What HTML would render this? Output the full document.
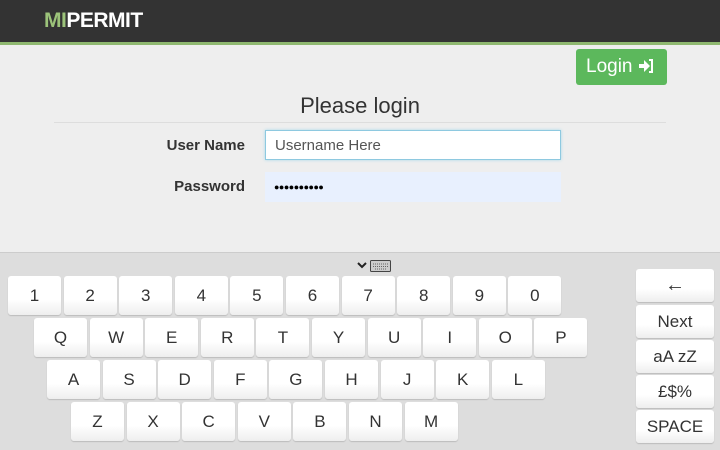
<!DOCTYPE html>
<html><head><meta charset="utf-8"><style>
*{margin:0;padding:0;box-sizing:border-box}
body{width:720px;height:450px;overflow:hidden;background:#eee;font-family:"Liberation Sans",Arial,sans-serif;position:relative}
.hdr{position:absolute;left:0;top:0;width:720px;height:42px;background:#333}
.gl{position:absolute;left:0;top:42px;width:720px;height:3px;background:#8fb870}
.logo{position:absolute;left:44px;top:9px;font-size:21px;font-weight:bold;color:#fff;letter-spacing:-0.5px}
.logo b{color:#9cc37a}
.btn{position:absolute;left:576px;top:49px;width:91px;height:36px;background:#5cb85c;border-radius:3px;color:#fff;font-size:19px;line-height:36px;padding-left:10px}
h1{position:absolute;left:0;width:720px;top:93px;text-align:center;font-weight:normal;font-size:22px;color:#333}
.hr{position:absolute;left:54px;top:122px;width:612px;height:1px;background:#ddd}
.lbl{position:absolute;right:475px;font-weight:bold;font-size:15px;color:#333}
.inp{position:absolute;left:265px;width:296px;height:30px;font-size:15px;padding-left:9px;line-height:30px}
.kb{position:absolute;left:0;top:252px;width:720px;height:198px;background:#ddd;border-top:1px solid #ccc}
.k{position:absolute;width:53px;height:39px;background:linear-gradient(#fff,#fff 60%,#eee);border-radius:3px;box-shadow:0 1px 1px #bbb;text-align:center;line-height:39px;font-size:17px;color:#333}
.r{left:636px;width:78px;height:33px;line-height:33px}
</style></head><body>
<div class="hdr"></div><div class="gl"></div>
<div class="logo"><b>MI</b>PERMIT</div>
<div class="btn">Login <svg width="16" height="16" viewBox="0 0 16 16" style="vertical-align:-2px"><path d="M1 6h5V2l6 6-6 6v-4H1z" fill="#fff"/><path d="M11 2h3v12h-3" stroke="#fff" stroke-width="2" fill="none"/></svg></div>
<h1>Please login</h1>
<div class="hr"></div>
<div class="lbl" style="top:137px">User Name</div>
<div class="inp" style="top:130px;background:#fff;border:1px solid #8ec9e0;box-shadow:0 0 3px #a8d8ea;color:#555">Username Here</div>
<div class="lbl" style="top:178px">Password</div>
<div class="inp" style="top:172px;background:#e8f0fe;color:#000;font-size:9px;letter-spacing:-0.5px">●●●●●●●●●●</div>
<div class="kb">
<svg style="position:absolute;left:357px;top:6px" width="36" height="14" viewBox="0 0 36 14"><path d="M1 4l4 4 4-4" stroke="#222" stroke-width="2" fill="none"/><rect x="13.5" y="1.5" width="20" height="11" rx="1" fill="#ccc" stroke="#444"/><path d="M16 5h15M16 7.5h15M18 10h11" stroke="#666" stroke-dasharray="1 1"/></svg>
</div>
<div class="k" style="left:8px;top:276px">1</div><div class="k" style="left:63.6px;top:276px">2</div><div class="k" style="left:119.2px;top:276px">3</div><div class="k" style="left:174.8px;top:276px">4</div><div class="k" style="left:230.4px;top:276px">5</div><div class="k" style="left:286px;top:276px">6</div><div class="k" style="left:341.6px;top:276px">7</div><div class="k" style="left:397.2px;top:276px">8</div><div class="k" style="left:452.8px;top:276px">9</div><div class="k" style="left:508.4px;top:276px">0</div>
<div class="k" style="left:34px;top:318px">Q</div><div class="k" style="left:89.6px;top:318px">W</div><div class="k" style="left:145.2px;top:318px">E</div><div class="k" style="left:200.8px;top:318px">R</div><div class="k" style="left:256.4px;top:318px">T</div><div class="k" style="left:312px;top:318px">Y</div><div class="k" style="left:367.6px;top:318px">U</div><div class="k" style="left:423.2px;top:318px">I</div><div class="k" style="left:478.8px;top:318px">O</div><div class="k" style="left:534.4px;top:318px">P</div>
<div class="k" style="left:47px;top:360px">A</div><div class="k" style="left:102.6px;top:360px">S</div><div class="k" style="left:158.2px;top:360px">D</div><div class="k" style="left:213.8px;top:360px">F</div><div class="k" style="left:269.4px;top:360px">G</div><div class="k" style="left:325px;top:360px">H</div><div class="k" style="left:380.6px;top:360px">J</div><div class="k" style="left:436.2px;top:360px">K</div><div class="k" style="left:491.8px;top:360px">L</div>
<div class="k" style="left:71px;top:402px">Z</div><div class="k" style="left:126.6px;top:402px">X</div><div class="k" style="left:182.2px;top:402px">C</div><div class="k" style="left:237.8px;top:402px">V</div><div class="k" style="left:293.4px;top:402px">B</div><div class="k" style="left:349px;top:402px">N</div><div class="k" style="left:404.6px;top:402px">M</div>
<div class="k r" style="top:269px;font-size:20px">←</div>
<div class="k r" style="top:305px">Next</div>
<div class="k r" style="top:340px">aA zZ</div>
<div class="k r" style="top:375px">£$%</div>
<div class="k r" style="top:410px">SPACE</div>
</body></html>
